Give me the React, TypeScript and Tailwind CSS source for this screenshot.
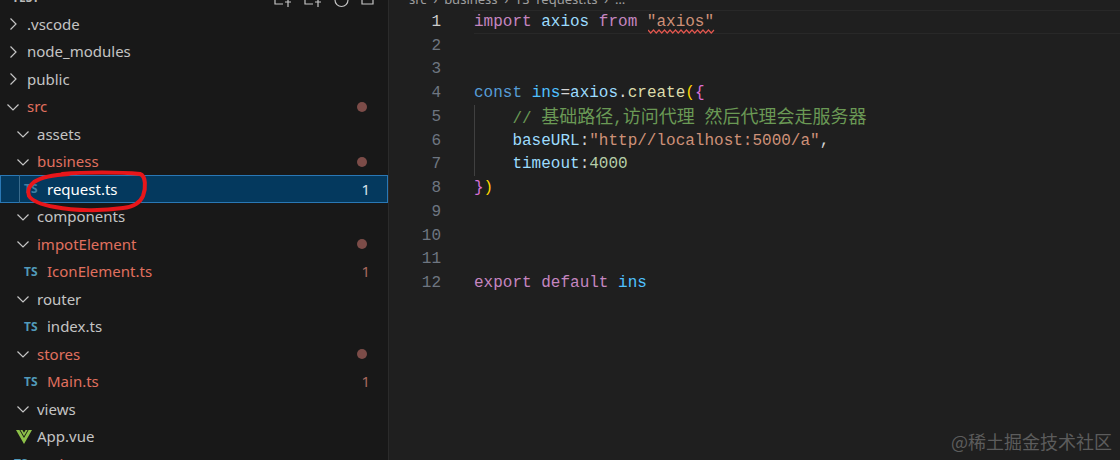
import React from 'react'

type Row = {
  name: string
  kind: 'closed' | 'open' | 'ts' | 'vue'
  depth: number
  red?: boolean
  dot?: boolean
  count?: boolean
  selected?: boolean
}

const rows: Row[] = [
  { name: '.vscode', kind: 'closed', depth: 0 },
  { name: 'node_modules', kind: 'closed', depth: 0 },
  { name: 'public', kind: 'closed', depth: 0 },
  { name: 'src', kind: 'open', depth: 0, red: true, dot: true },
  { name: 'assets', kind: 'open', depth: 1 },
  { name: 'business', kind: 'open', depth: 1, red: true, dot: true },
  { name: 'request.ts', kind: 'ts', depth: 2, selected: true, count: true },
  { name: 'components', kind: 'open', depth: 1 },
  { name: 'impotElement', kind: 'open', depth: 1, red: true, dot: true },
  { name: 'IconElement.ts', kind: 'ts', depth: 2, red: true, count: true },
  { name: 'router', kind: 'open', depth: 1 },
  { name: 'index.ts', kind: 'ts', depth: 2 },
  { name: 'stores', kind: 'open', depth: 1, red: true, dot: true },
  { name: 'Main.ts', kind: 'ts', depth: 2, red: true, count: true },
  { name: 'views', kind: 'open', depth: 1 },
  { name: 'App.vue', kind: 'vue', depth: 1 },
  { name: 'main.ts', kind: 'ts', depth: 1, red: true, count: true },
]

const Chevron = ({ open }: { open: boolean }) => (
  <svg width="16" height="16" viewBox="0 0 16 16" fill="none" stroke="#c5c5c5" strokeWidth="1.2" className="shrink-0">
    <path d={open ? 'M2.5 5.5 8 11l5.5-5.5' : 'M5.5 2.5 11 8l-5.5 5.5'} />
  </svg>
)

const VueIcon = () => (
  <svg width="16" height="14" viewBox="0 0 16 14" className="shrink-0">
    <path d="M0 0h3.4L8 8l4.6-8H16L8 14z" fill="#8dc149" />
    <path d="M4.4 0h2L8 2.8 9.6 0h2L8 6.2z" fill="#8dc149" />
  </svg>
)

const TreeRow = ({ row }: { row: Row }) => {
  const isFolder = row.kind === 'open' || row.kind === 'closed'
  let pad = 'pl-[15px]'
  if (row.kind === 'ts') pad = row.depth === 2 ? 'pl-6' : 'pl-[14px]'
  if (row.kind === 'vue') pad = 'pl-4'
  if (isFolder && row.depth === 0) pad = 'pl-[5px]'
  return (
    <div
      className={`relative flex h-[27.5px] shrink-0 items-center pr-[19px] text-[15px] ${pad} ${
        row.selected ? 'bg-[#04395e] outline outline-1 -outline-offset-1 outline-[#2a78b5]' : ''
      }`}
    >
      {row.selected && <div className="absolute left-[19px] top-0 h-full w-px bg-[#3a6b8c]" />}
      {row.kind === 'ts' && (
        <span className={`w-[23px] shrink-0 text-[12px] font-bold leading-none ${row.selected ? 'text-[#3f7fa3]' : 'text-[#519aba]'}`}>
          TS
        </span>
      )}
      {row.kind === 'vue' && (
        <span className="w-[21px] shrink-0">
          <VueIcon />
        </span>
      )}
      {isFolder && (
        <span className="w-[22px] shrink-0">
          <Chevron open={row.kind === 'open'} />
        </span>
      )}
      <span className={`flex-1 ${row.selected ? 'text-white' : row.red ? 'text-[#e0705f]' : 'text-[#c4c4c4]'}`}>{row.name}</span>
      {row.dot && <span className="mr-[2px] h-[10px] w-[10px] rounded-full bg-[#7c4c48]" />}
      {row.count && <span className={`-mr-px text-[15px] ${row.selected ? 'text-[#d8e4ec]' : 'text-[#a8685f]'}`}>1</span>}
    </div>
  )
}

const Line = ({ n, active, children }: { n: number; active?: boolean; children?: React.ReactNode }) => (
  <div className="flex h-[23.75px] shrink-0 items-center">
    <span className={`w-[52px] shrink-0 text-right ${active ? 'text-[#cccccc]' : 'text-[#6e7681]'}`}>{n}</span>
    <div className={`ml-[33px] flex h-full flex-1 items-center ${active ? 'border-y border-[#282828]' : ''}`}>
      <span className="whitespace-pre">{children}</span>
    </div>
  </div>
)

const Squiggle = () => (
  <svg width="67" height="5" viewBox="0 0 67 5" fill="none" className="absolute left-[259px] top-[29px]">
    <path
      d="M0 1 l2.75 3 l2.75-3 l2.75 3 l2.75-3 l2.75 3 l2.75-3 l2.75 3 l2.75-3 l2.75 3 l2.75-3 l2.75 3 l2.75-3 l2.75 3 l2.75-3 l2.75 3 l2.75-3 l2.75 3 l2.75-3 l2.75 3 l2.75-3 l2.75 3 l2.75-3 l2.75 3 l2.75-3"
      stroke="#e0564e"
      strokeWidth="1.2"
    />
  </svg>
)

export default function App() {
  return (
    <div className="relative flex h-[460px] w-[1120px] overflow-hidden bg-[#1f1f1f] font-['Noto_Sans','Liberation_Sans',sans-serif]">
      <aside className="flex w-[389px] shrink-0 flex-col border-r border-[#2b2b2b] bg-[#181818]">
        <div className="relative flex h-[10.25px] shrink-0 items-start justify-between overflow-hidden pl-[12px] pr-[14px]">
          <span className="-translate-y-[8px] text-[12px] font-bold leading-none text-[#bbbbbb]">TEST</span>
          <div className="flex items-start gap-[12px] text-[#c5c5c5]">
            <svg width="18" height="8" viewBox="0 0 18 8" fill="none" stroke="currentColor" strokeWidth="1.2"><path d="M1 0v4h8M11 2h6M14 0v7" /></svg>
            <svg width="18" height="8" viewBox="0 0 18 8" fill="none" stroke="currentColor" strokeWidth="1.2"><path d="M1 0v4h8M11 2h6M14 0v7" /></svg>
            <svg width="15" height="8" viewBox="0 0 15 8" fill="none" stroke="currentColor" strokeWidth="1.2"><path d="M1 0a6.5 6.5 0 0 0 13 0" /></svg>
            <svg width="13" height="8" viewBox="0 0 13 8" fill="none" stroke="currentColor" strokeWidth="1.2"><path d="M1 0v4h11V0" /></svg>
          </div>
        </div>
        {rows.map((row) => (
          <TreeRow key={row.name} row={row} />
        ))}
      </aside>

      <main className="relative flex min-w-0 flex-1 flex-col font-['Liberation_Mono','Noto_Sans_CJK_SC',monospace] text-[16px] text-[#9cdcfe]">
        <div className="h-[10px] shrink-0 overflow-hidden whitespace-pre pl-[20px] font-['Noto_Sans',sans-serif] text-[13px] leading-none text-[#a0a0a0]">
          <span className="relative top-[-7px]">src  ›  business  ›  TS  request.ts  ›  …</span>
        </div>
        <div className="flex flex-col">
          <Line n={1} active>
            <span className="text-[#c586c0]">import</span> axios <span className="text-[#c586c0]">from</span>{' '}
            <span className="text-[#ce9178]">"axios"</span>
          </Line>
          <Line n={2} />
          <Line n={3} />
          <Line n={4}>
            <span className="text-[#569cd6]">const</span> <span className="text-[#4fc1ff]">ins</span>
            <span className="text-[#d4d4d4]">=</span>axios<span className="text-[#d4d4d4]">.</span>
            <span className="text-[#dcdcaa]">create</span>
            <span className="text-[#ffd700]">(</span>
            <span className="text-[#da70d6]">{'{'}</span>
          </Line>
          <Line n={5}>
            <span className="text-[#6a9955]">
              {'    // '}
              <span className="font-['Noto_Sans_CJK_SC',sans-serif] text-[18px]">基础路径</span>,
              <span className="font-['Noto_Sans_CJK_SC',sans-serif] text-[18px]">访问代理</span>{' '}
              <span className="font-['Noto_Sans_CJK_SC',sans-serif] text-[18px]">然后代理会走服务器</span>
            </span>
          </Line>
          <Line n={6}>
            {'    baseURL'}
            <span className="text-[#d4d4d4]">:</span>
            <span className="text-[#ce9178]">"http//localhost:5000/a"</span>
            <span className="text-[#d4d4d4]">,</span>
          </Line>
          <Line n={7}>
            {'    timeout'}
            <span className="text-[#d4d4d4]">:</span>
            <span className="text-[#b5cea8]">4000</span>
          </Line>
          <Line n={8}>
            <span className="text-[#da70d6]">{'}'}</span>
            <span className="text-[#ffd700]">)</span>
          </Line>
          <Line n={9} />
          <Line n={10} />
          <Line n={11} />
          <Line n={12}>
            <span className="text-[#c586c0]">export</span> <span className="text-[#c586c0]">default</span>{' '}
            <span className="text-[#4fc1ff]">ins</span>
          </Line>
        </div>
        <Squiggle />
        <div className="absolute left-[85px] top-[105px] h-[71px] w-px bg-[#404040]" />
      </main>

      <svg width="160" height="60" viewBox="0 0 160 60" fill="none" className="pointer-events-none absolute left-0 top-[162px]">
        <path
          d="M62 12C85 10 120 10 140 12c6 2 6 14 3 22-3 7-10 11-20 12-20 3-48 3-68-1-12-2-22-5-26-11-2-5 0-10 5-14 6-4 15-7 35-8"
          stroke="#e8161a"
          strokeWidth="4"
          strokeLinecap="round"
        />
      </svg>

      <div className="absolute bottom-[10px] right-[8px] font-['Noto_Sans_CJK_SC',sans-serif] text-[18px] leading-none text-[#5c5c5c]">
        @稀土掘金技术社区
      </div>
    </div>
  )
}
